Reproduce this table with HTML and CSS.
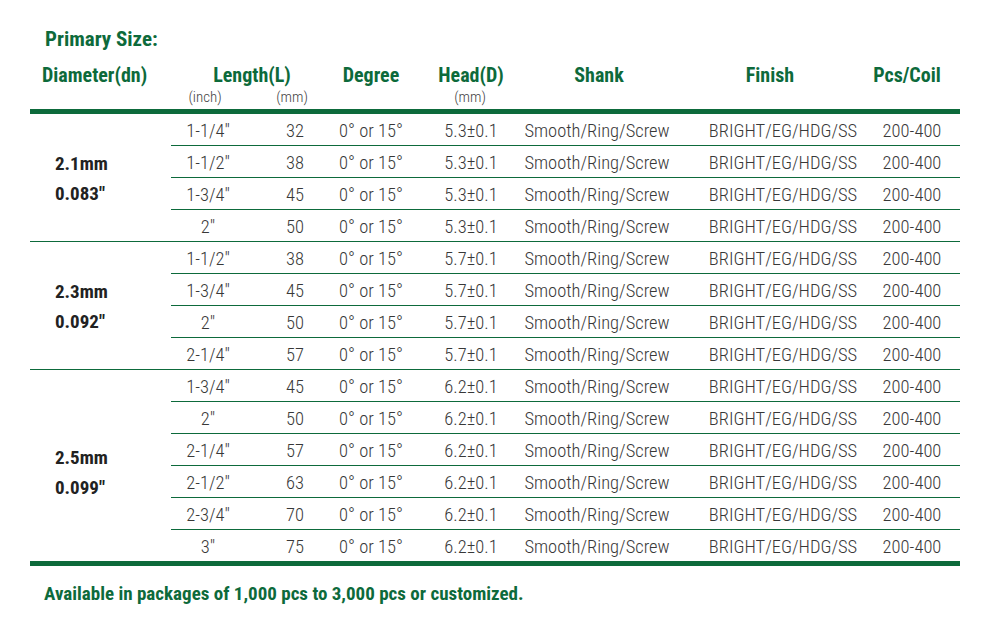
FILE: index.html
```html
<!DOCTYPE html>
<html lang="en">
<head>
<meta charset="utf-8">
<title>Primary Size</title>
<link rel="stylesheet" href="styles.css">
</head>
<body>
<div class="page">
  <h1 class="title">Primary Size:</h1>
  <div class="spec">
    <div class="head">
      <div class="h h-diam">Diameter(dn)</div>
      <div class="h h-len">Length(L)</div>
      <div class="h h-deg">Degree</div>
      <div class="h h-head">Head(D)</div>
      <div class="h h-shank">Shank</div>
      <div class="h h-finish">Finish</div>
      <div class="h h-pcs">Pcs/Coil</div>
      <div class="s s-in">(inch)</div>
      <div class="s s-mm">(mm)</div>
      <div class="s s-hmm">(mm)</div>
    </div>
    <div class="bar"></div>

    <div class="group">
      <div class="diam"><span>2.1mm</span><span>0.083″</span></div>
      <div class="rows">
        <div class="row"><span class="c c-in">1-1/4″</span><span class="c c-mm">32</span><span class="c c-deg">0° or 15°</span><span class="c c-head">5.3±0.1</span><span class="c c-shank">Smooth/Ring/Screw</span><span class="c c-finish">BRIGHT/EG/HDG/SS</span><span class="c c-pcs">200-400</span></div>
        <div class="row"><span class="c c-in">1-1/2″</span><span class="c c-mm">38</span><span class="c c-deg">0° or 15°</span><span class="c c-head">5.3±0.1</span><span class="c c-shank">Smooth/Ring/Screw</span><span class="c c-finish">BRIGHT/EG/HDG/SS</span><span class="c c-pcs">200-400</span></div>
        <div class="row"><span class="c c-in">1-3/4″</span><span class="c c-mm">45</span><span class="c c-deg">0° or 15°</span><span class="c c-head">5.3±0.1</span><span class="c c-shank">Smooth/Ring/Screw</span><span class="c c-finish">BRIGHT/EG/HDG/SS</span><span class="c c-pcs">200-400</span></div>
        <div class="row"><span class="c c-in">2″</span><span class="c c-mm">50</span><span class="c c-deg">0° or 15°</span><span class="c c-head">5.3±0.1</span><span class="c c-shank">Smooth/Ring/Screw</span><span class="c c-finish">BRIGHT/EG/HDG/SS</span><span class="c c-pcs">200-400</span></div>
      </div>
    </div>

    <div class="group">
      <div class="diam"><span>2.3mm</span><span>0.092″</span></div>
      <div class="rows">
        <div class="row"><span class="c c-in">1-1/2″</span><span class="c c-mm">38</span><span class="c c-deg">0° or 15°</span><span class="c c-head">5.7±0.1</span><span class="c c-shank">Smooth/Ring/Screw</span><span class="c c-finish">BRIGHT/EG/HDG/SS</span><span class="c c-pcs">200-400</span></div>
        <div class="row"><span class="c c-in">1-3/4″</span><span class="c c-mm">45</span><span class="c c-deg">0° or 15°</span><span class="c c-head">5.7±0.1</span><span class="c c-shank">Smooth/Ring/Screw</span><span class="c c-finish">BRIGHT/EG/HDG/SS</span><span class="c c-pcs">200-400</span></div>
        <div class="row"><span class="c c-in">2″</span><span class="c c-mm">50</span><span class="c c-deg">0° or 15°</span><span class="c c-head">5.7±0.1</span><span class="c c-shank">Smooth/Ring/Screw</span><span class="c c-finish">BRIGHT/EG/HDG/SS</span><span class="c c-pcs">200-400</span></div>
        <div class="row"><span class="c c-in">2-1/4″</span><span class="c c-mm">57</span><span class="c c-deg">0° or 15°</span><span class="c c-head">5.7±0.1</span><span class="c c-shank">Smooth/Ring/Screw</span><span class="c c-finish">BRIGHT/EG/HDG/SS</span><span class="c c-pcs">200-400</span></div>
      </div>
    </div>

    <div class="group last">
      <div class="diam"><span>2.5mm</span><span>0.099″</span></div>
      <div class="rows">
        <div class="row"><span class="c c-in">1-3/4″</span><span class="c c-mm">45</span><span class="c c-deg">0° or 15°</span><span class="c c-head">6.2±0.1</span><span class="c c-shank">Smooth/Ring/Screw</span><span class="c c-finish">BRIGHT/EG/HDG/SS</span><span class="c c-pcs">200-400</span></div>
        <div class="row"><span class="c c-in">2″</span><span class="c c-mm">50</span><span class="c c-deg">0° or 15°</span><span class="c c-head">6.2±0.1</span><span class="c c-shank">Smooth/Ring/Screw</span><span class="c c-finish">BRIGHT/EG/HDG/SS</span><span class="c c-pcs">200-400</span></div>
        <div class="row"><span class="c c-in">2-1/4″</span><span class="c c-mm">57</span><span class="c c-deg">0° or 15°</span><span class="c c-head">6.2±0.1</span><span class="c c-shank">Smooth/Ring/Screw</span><span class="c c-finish">BRIGHT/EG/HDG/SS</span><span class="c c-pcs">200-400</span></div>
        <div class="row"><span class="c c-in">2-1/2″</span><span class="c c-mm">63</span><span class="c c-deg">0° or 15°</span><span class="c c-head">6.2±0.1</span><span class="c c-shank">Smooth/Ring/Screw</span><span class="c c-finish">BRIGHT/EG/HDG/SS</span><span class="c c-pcs">200-400</span></div>
        <div class="row"><span class="c c-in">2-3/4″</span><span class="c c-mm">70</span><span class="c c-deg">0° or 15°</span><span class="c c-head">6.2±0.1</span><span class="c c-shank">Smooth/Ring/Screw</span><span class="c c-finish">BRIGHT/EG/HDG/SS</span><span class="c c-pcs">200-400</span></div>
        <div class="row"><span class="c c-in">3″</span><span class="c c-mm">75</span><span class="c c-deg">0° or 15°</span><span class="c c-head">6.2±0.1</span><span class="c c-shank">Smooth/Ring/Screw</span><span class="c c-finish">BRIGHT/EG/HDG/SS</span><span class="c c-pcs">200-400</span></div>
      </div>
    </div>
    <div class="bar"></div>
  </div>
  <p class="note">Available in packages of 1,000 pcs to 3,000 pcs or customized.</p>
</div>
</body>
</html>
```
FILE: styles.css
```css
* { box-sizing: border-box; }
html, body { margin: 0; padding: 0; background: #fff; }
body {
  font-family: "Roboto Condensed", "Liberation Sans Narrow", "DejaVu Sans Condensed", "Roboto", sans-serif;
  font-stretch: condensed;
  color: #383838;
}
.page {
  width: 999px;
  height: 623px;
  padding: 27px 0 0 30px;
}
.title {
  margin: 0 0 12px 15px;
  font-size: 21px;
  line-height: 24px;
  font-weight: 700;
  color: #0d6a3b;
}
.spec { width: 930px; }
.head {
  display: grid;
  grid-template-columns: 141px 74px 88px 88px 113px 156px 157px 113px;
  grid-template-rows: 24px 18px;
  padding-bottom: 4px;
  color: #0d6a3b;
}
.h {
  display: flex;
  justify-content: center;
  font-size: 20px;
  line-height: 24px;
  font-weight: 700;
  white-space: nowrap;
  grid-row: 1;
}
.h-diam { grid-column: 1; justify-content: flex-start; padding-left: 12px; }
.h-len { grid-column: 2 / 4; }
.h-deg { grid-column: 4; padding-right: 12px; }
.h-head { grid-column: 5; padding-right: 13px; }
.h-shank { grid-column: 6; padding-right: 26px; }
.h-finish { grid-column: 7; padding-left: 3px; }
.h-pcs { grid-column: 8; padding-left: 7px; }
.s {
  grid-row: 2;
  display: flex;
  justify-content: center;
  align-items: flex-end;
  font-size: 15px;
  line-height: 16px;
  font-weight: 300;
  color: #444;
}
.s-in { grid-column: 2; padding-right: 6px; }
.s-mm { grid-column: 3; padding-left: 6px; }
.s-hmm { grid-column: 5; padding-right: 15px; }
.bar { height: 5px; background: #0d6a3b; }
.group {
  display: grid;
  grid-template-columns: 141px 789px;
  border-bottom: 1px solid #0d6a3b;
}
.group.last { border-bottom: 0; }
.diam {
  display: flex;
  flex-direction: column;
  justify-content: center;
  padding-left: 25px;
  padding-top: 2px;
  font-size: 19px;
  line-height: 30px;
  font-weight: 700;
  color: #222;
}
.group.last .diam { padding-top: 15px; }
.rows { display: flex; flex-direction: column; }
.row {
  display: grid;
  grid-template-columns: 74px 88px 88px 113px 156px 157px 113px;
  height: 32px;
  padding-top: 3px;
  border-bottom: 1px solid #0d6a3b;
  align-items: center;
}
.row:last-child { border-bottom: 0; height: 31px; }
.c {
  display: flex;
  justify-content: center;
  font-size: 18.5px;
  line-height: 24px;
  font-weight: 300;
  white-space: nowrap;
}
.c-mm { padding-left: 12px; }
.c-deg { padding-right: 12px; }
.c-head { padding-right: 13px; }
.c-shank { padding-right: 30px; }
.c-finish { padding-left: 29px; }
.c-pcs { padding-left: 17px; }
.note {
  margin: 16px 0 0 14px;
  font-size: 19px;
  line-height: 24px;
  font-weight: 700;
  color: #0d6a3b;
}
```
